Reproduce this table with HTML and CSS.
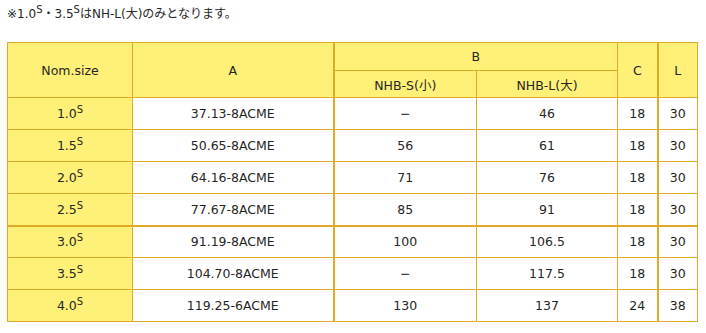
FILE: index.html
```html
<!DOCTYPE html>
<html lang="ja">
<head>
<meta charset="utf-8">
<link rel="stylesheet" href="styles.css">
</head>
<body>
<div class="page">
  <p class="note">※1.0<sup>S</sup>・3.5<sup>S</sup>はNH-L(大)のみとなります。</p>
  <table class="spec">
    <colgroup>
      <col class="c-nom"><col class="c-a"><col class="c-b1"><col class="c-b2"><col class="c-c"><col class="c-l">
    </colgroup>
    <thead>
      <tr class="h1">
        <th rowspan="2">Nom.size</th>
        <th rowspan="2" class="sep-r">A</th>
        <th colspan="2">B</th>
        <th rowspan="2">C</th>
        <th rowspan="2" class="sep-l">L</th>
      </tr>
      <tr class="h2">
        <th>NHB-S(小)</th>
        <th>NHB-L(大)</th>
      </tr>
    </thead>
    <tbody>
      <tr><th>1.0<sup>S</sup></th><td class="sep-r">37.13-8ACME</td><td>−</td><td>46</td><td>18</td><td class="sep-l">30</td></tr>
      <tr><th>1.5<sup>S</sup></th><td class="sep-r">50.65-8ACME</td><td>56</td><td>61</td><td>18</td><td class="sep-l">30</td></tr>
      <tr><th>2.0<sup>S</sup></th><td class="sep-r">64.16-8ACME</td><td>71</td><td>76</td><td>18</td><td class="sep-l">30</td></tr>
      <tr class="sep-b"><th>2.5<sup>S</sup></th><td class="sep-r">77.67-8ACME</td><td>85</td><td>91</td><td>18</td><td class="sep-l">30</td></tr>
      <tr><th>3.0<sup>S</sup></th><td class="sep-r">91.19-8ACME</td><td>100</td><td>106.5</td><td>18</td><td class="sep-l">30</td></tr>
      <tr><th>3.5<sup>S</sup></th><td class="sep-r">104.70-8ACME</td><td>−</td><td>117.5</td><td>18</td><td class="sep-l">30</td></tr>
      <tr><th>4.0<sup>S</sup></th><td class="sep-r">119.25-6ACME</td><td>130</td><td>137</td><td>24</td><td class="sep-l">38</td></tr>
    </tbody>
  </table>
</div>
</body>
</html>
```
FILE: styles.css
```css
html, body {
  margin: 0;
  padding: 0;
  background: #ffffff;
}
.page {
  padding: 4px 0 0 7px;
  font-family: "DejaVu Sans", "Noto Sans CJK JP", sans-serif;
  font-size: 12px;
  color: #262626;
}
.note {
  margin: 0;
  line-height: 20px;
}
sup {
  font-size: 10px;
  line-height: 0;
  vertical-align: 5px;
}
.spec {
  margin-top: 18px;
  border-collapse: collapse;
  table-layout: fixed;
  width: 690px;
  font-size: 12.5px;
}
.c-nom { width: 125px; }
.c-a { width: 201px; }
.c-b1 { width: 143px; }
.c-b2 { width: 141px; }
.c-c { width: 40px; }
.c-l { width: 40px; }
.spec th, .spec td {
  border: 1px solid #dfa92a;
  text-align: center;
  vertical-align: middle;
  font-weight: normal;
  padding: 0;
}
.spec th {
  background: #fff078;
}
.spec td {
  background: #ffffff;
}
.h1 th { height: 27px; }
.h2 th { height: 26px; }
.spec tbody tr { height: 32px; }
.spec .sep-r { border-right: 2px solid #dfa92a; }
.spec .sep-l { border-left: 2px solid #dfa92a; }
.spec .sep-b th, .spec .sep-b td { border-bottom: 2px solid #dfa92a; }
```
